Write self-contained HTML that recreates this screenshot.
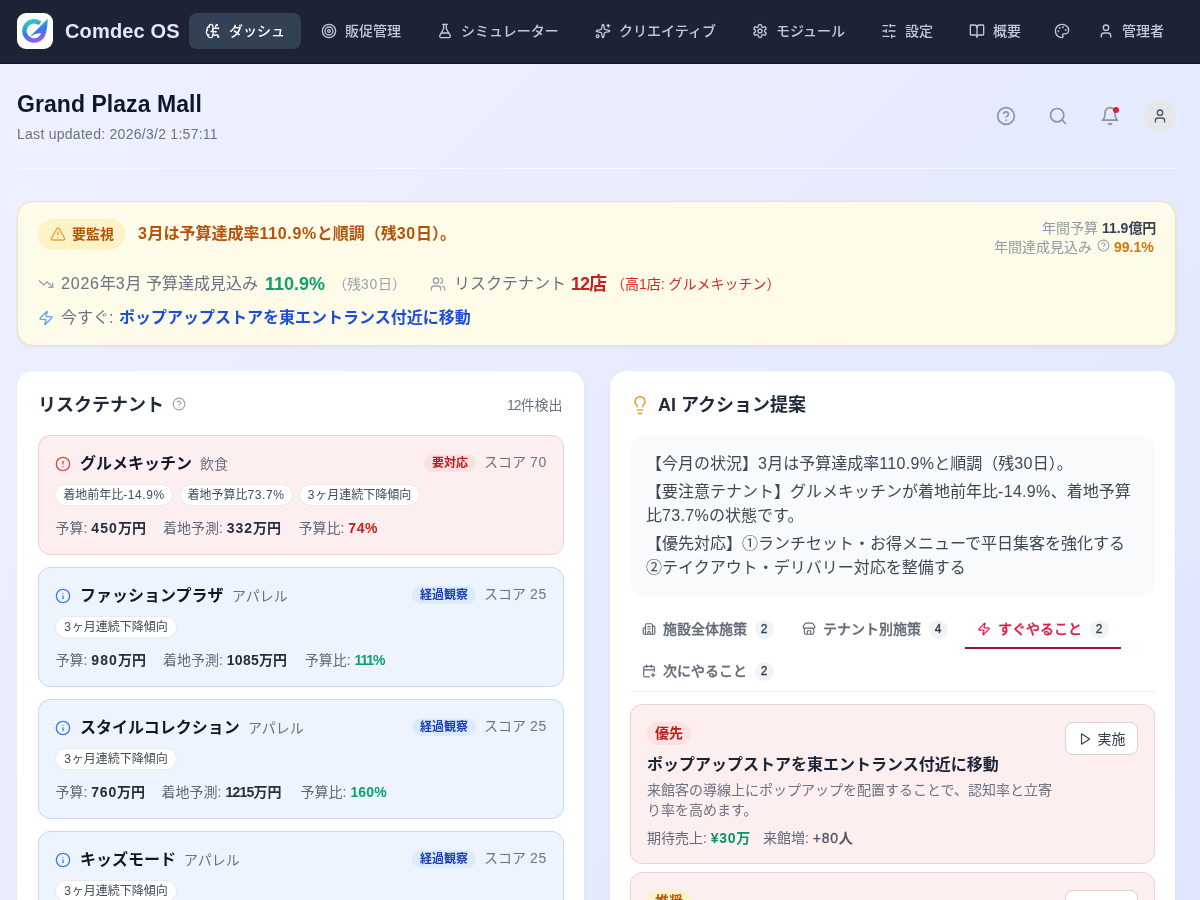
<!DOCTYPE html>
<html lang="ja">
<head>
<meta charset="utf-8">
<title>Comdec OS</title>
<style>
*{box-sizing:border-box;margin:0;padding:0}
html,body{width:1200px;height:900px;overflow:hidden}
body{font-family:"Liberation Sans","Noto Sans CJK JP",sans-serif;color:#111827;background:linear-gradient(135deg,#eef1fe 0%,#e7ebfd 50%,#e0e6fd 100%);position:relative;-webkit-font-smoothing:antialiased}
svg.i{fill:none;stroke:currentColor;stroke-width:2;stroke-linecap:round;stroke-linejoin:round;display:block;flex:none}
.abs{position:absolute}
.nw{white-space:nowrap}
/* NAV */
#nav{position:absolute;left:0;top:0;width:1200px;height:64px;background:#1e2235;border-bottom:1px solid #10162a}
#logo{position:absolute;left:17px;top:13px;width:36px;height:36px;border-radius:9px;background:#fff;overflow:hidden}
#brand{position:absolute;left:65px;top:18px;font-size:20px;line-height:26px;font-weight:700;--ds:0em;color:#e0e7ff;white-space:nowrap;letter-spacing:.15px}
.ni{position:absolute;top:13px;height:36px;border-radius:8px;display:flex;align-items:center;color:#c0c9d9;font-size:14px;font-weight:500;white-space:nowrap}
.ni svg{width:16px;height:16px;position:absolute;top:10px}
.ni span{position:absolute;top:8px;line-height:20px}
.ni.on{background:#334155;color:#fff}
/* HEADER */
#h1{position:absolute;left:17px;top:88px;font-size:23px;line-height:32px;letter-spacing:.05px;font-weight:700;--ds:0em;color:#0f172a;white-space:nowrap}
#sub{position:absolute;left:17px;top:124px;font-size:14px;line-height:20px;letter-spacing:.27px;color:#6b7280;white-space:nowrap}
.hb{position:absolute;color:#8c94a3}
.hb svg{width:20px;height:20px}
#divider{position:absolute;left:17px;top:168px;width:1158px;height:1px;background:rgba(255,255,255,.55)}
/* BANNER */
#banner{position:absolute;left:17px;top:201px;width:1159px;height:145px;border-radius:16px;background:#fefbe9;border:1px solid #f2e4aa;box-shadow:0 1px 3px rgba(0,0,0,.06)}

#banner .t{position:absolute;white-space:nowrap}
.pill{position:absolute;left:20px;top:17px;width:87px;height:31px;border-radius:16px;background:#fef3c7;color:#b45309}

/* CARDS */
.card{position:absolute;top:371px;height:560px;background:#fff;border-radius:16px;box-shadow:0 1px 3px rgba(0,0,0,.05)}
.card .t{position:absolute;white-space:nowrap}
.tc{position:absolute;left:21px;width:526px;height:120px;border-radius:12px;border:1px solid #c9d8ea;background:#eef4fe}
.tc.red{border-color:#efcfd0;background:#fdefef}
.tc .t{position:absolute;white-space:nowrap}
.tc .nm{left:41px;top:16px;font-size:16px;line-height:24px;font-weight:700;--ds:0em;color:#111827}
.tc .cat{top:18px;font-size:14px;line-height:20px;color:#6b7280}
.tc .bd{position:absolute;left:385px;top:18px;width:52px;height:18px;border-radius:9px;font-size:12px;line-height:18px;font-weight:700;--ds:0em;text-align:center;white-space:nowrap}
.tc .bd.r{background:#fbe1e1;color:#b91c1c}
.tc .bd.b{left:373px;width:64px;background:#dbeafe;color:#1e40af}
.tc .sc{left:445px;top:16px;font-size:14px;line-height:20px;color:#6b7280}
.chip{position:absolute;top:48px;height:22px;border-radius:11px;border:1px solid #e8eaee;background:#fff;font-size:12px;line-height:20px;color:#434c5a;white-space:nowrap;text-align:center}
.strow{position:absolute;left:16px;top:82px;font-size:14px;line-height:20px;color:#606876;white-space:nowrap}
.strow b{color:#252e3b}
.strow span.s{position:absolute;top:0}
.tc svg.ic{position:absolute;left:16px;top:20px;width:16px;height:16px}

#sum{position:absolute;left:21px;top:65px;width:524px;height:160px;border-radius:12px;background:#f8fafc;padding:16px 16px 16px 15px;font-size:16px;line-height:24px;color:#3f4856;--ds:.02em}
#sum p{white-space:nowrap;margin-bottom:4px}
.tab{position:absolute;height:40px;color:#636b78;font-size:14px;font-weight:500}
.tab svg{position:absolute;left:12px;top:13px;width:14px;height:14px}
.tab .t{left:33px;top:10px;line-height:20px;font-weight:500;-webkit-text-stroke:.3px}
.tab .n{position:absolute;top:11px;width:19px;height:19px;border-radius:10px;background:#f1f3f7;color:#374151;font-size:12px;line-height:19px;text-align:center;font-weight:400;-webkit-text-stroke:.35px}
.tab.on{color:#dc1c48;border-bottom:2px solid #9f1239}
.ac{position:absolute;left:20px;width:525px;height:160px;border-radius:12px;border:1px solid #ead3d6;background:#fdeef0}
.ac .t{position:absolute;white-space:nowrap}
.ac .pb{position:absolute;left:16px;top:17px;width:44px;height:23px;border-radius:12px;font-size:14px;line-height:23px;font-weight:700;--ds:0em;text-align:center}
.ac .btn{position:absolute;left:434px;top:17px;width:73px;height:33px;border-radius:8px;border:1px solid #d1d5db;background:#fff;color:#374151;font-size:14px}
.ac .btn svg{position:absolute;left:11.500px;top:9px;width:14px;height:14px}
.ac .btn span{position:absolute;left:31.500px;top:6px;line-height:20px}
#root{position:absolute;left:0;top:0;width:1200px;height:900px;will-change:transform}
.d{letter-spacing:var(--ds,.05em)}
b .d{letter-spacing:var(--bs,0em)}
#sub .d{letter-spacing:inherit}
</style>
</head>
<body>
<div id="root">
<div id="nav">
  <div id="logo"><svg viewBox="0 0 36 36" width="36" height="36" style="display:block"><defs><linearGradient id="lg" gradientUnits="userSpaceOnUse" x1="14" y1="6" x2="22" y2="30"><stop offset="0" stop-color="#2dd4bf"/><stop offset=".5" stop-color="#2f7fe6"/><stop offset="1" stop-color="#a855f7"/></linearGradient></defs><path d="M23.040 10.300A9.650 9.650 0 1 0 26.700 18.900" fill="none" stroke="url(#lg)" stroke-width="4.500"/><path d="M30.600 5.800L12.900 23.800C18 20.400 23.500 19.600 28.900 20C30.200 15.500 30.700 10.500 30.600 5.800Z" fill="url(#lg)"/></svg></div>
  <div id="brand">Comdec OS</div>

  <div class="ni on" style="left:189px;width:112px"><svg class="i" style="left:16px" viewBox="0 0 24 24"><path d="M12 5a3 3 0 1 0-5.997.125 4 4 0 0 0-2.526 5.770 4 4 0 0 0 .556 6.588A4 4 0 1 0 12 18Z"/><path d="M9 13a4.500 4.500 0 0 0 3-4"/><path d="M6.003 5.125A3 3 0 0 0 6.401 6.500"/><path d="M3.477 10.896a4 4 0 0 1 .585-.396"/><path d="M6 18a4 4 0 0 1-1.967-.516"/><path d="M12 13h4"/><path d="M12 18h6a2 2 0 0 1 2 2v1"/><path d="M12 8h8"/><path d="M16 8V5a2 2 0 0 1 2-2"/><circle cx="16" cy="13" r=".5"/><circle cx="18" cy="3" r=".5"/><circle cx="20" cy="21" r=".5"/><circle cx="20" cy="8" r=".5"/></svg><span style="left:40px">ダッシュ</span></div>
  <div class="ni" style="left:305px;width:112px"><svg class="i" style="left:16px" viewBox="0 0 24 24"><circle cx="12" cy="12" r="10"/><circle cx="12" cy="12" r="6"/><circle cx="12" cy="12" r="2"/></svg><span style="left:40px">販促管理</span></div>
  <div class="ni" style="left:421px;width:154px"><svg class="i" style="left:16px" viewBox="0 0 24 24"><path d="M14 2v6a2 2 0 0 0 .245.96l5.510 10.080A2 2 0 0 1 18 22H6a2 2 0 0 1-1.755-2.960l5.510-10.080A2 2 0 0 0 10 8V2"/><path d="M6.453 15h11.094"/><path d="M8.500 2h7"/></svg><span style="left:40px">シミュレーター</span></div>
  <div class="ni" style="left:579px;width:154px"><svg class="i" style="left:16px" viewBox="0 0 24 24"><path d="M11.017 2.814a1 1 0 0 1 1.966 0l1.051 5.558a2 2 0 0 0 1.594 1.594l5.558 1.051a1 1 0 0 1 0 1.966l-5.558 1.051a2 2 0 0 0-1.594 1.594l-1.051 5.558a1 1 0 0 1-1.966 0l-1.051-5.558a2 2 0 0 0-1.594-1.594l-5.558-1.051a1 1 0 0 1 0-1.966l5.558-1.051a2 2 0 0 0 1.594-1.594z"/><path d="M20 2v4"/><path d="M22 4h-4"/><circle cx="4" cy="20" r="2"/></svg><span style="left:40px">クリエイティブ</span></div>
  <div class="ni" style="left:736px;width:126px"><svg class="i" style="left:16px" viewBox="0 0 24 24"><path d="M12.220 2h-.440a2 2 0 0 0-2 2v.180a2 2 0 0 1-1 1.730l-.430.250a2 2 0 0 1-2 0l-.150-.080a2 2 0 0 0-2.730.730l-.220.380a2 2 0 0 0 .730 2.730l.150.100a2 2 0 0 1 1 1.720v.510a2 2 0 0 1-1 1.740l-.150.090a2 2 0 0 0-.730 2.730l.220.380a2 2 0 0 0 2.730.730l.150-.080a2 2 0 0 1 2 0l.430.250a2 2 0 0 1 1 1.730V20a2 2 0 0 0 2 2h.440a2 2 0 0 0 2-2v-.180a2 2 0 0 1 1-1.730l.430-.250a2 2 0 0 1 2 0l.150.080a2 2 0 0 0 2.730-.730l.220-.390a2 2 0 0 0-.730-2.730l-.150-.080a2 2 0 0 1-1-1.740v-.500a2 2 0 0 1 1-1.740l.150-.090a2 2 0 0 0 .730-2.730l-.220-.380a2 2 0 0 0-2.730-.730l-.150.080a2 2 0 0 1-2 0l-.430-.250a2 2 0 0 1-1-1.730V4a2 2 0 0 0-2-2z"/><circle cx="12" cy="12" r="3"/></svg><span style="left:40px">モジュール</span></div>
  <div class="ni" style="left:865px;width:84px"><svg class="i" style="left:16px" viewBox="0 0 24 24"><line x1="21" x2="14" y1="4" y2="4"/><line x1="10" x2="3" y1="4" y2="4"/><line x1="21" x2="12" y1="12" y2="12"/><line x1="8" x2="3" y1="12" y2="12"/><line x1="21" x2="16" y1="20" y2="20"/><line x1="12" x2="3" y1="20" y2="20"/><line x1="14" x2="14" y1="2" y2="6"/><line x1="8" x2="8" y1="10" y2="14"/><line x1="16" x2="16" y1="18" y2="22"/></svg><span style="left:40px">設定</span></div>
  <div class="ni" style="left:953px;width:84px"><svg class="i" style="left:16px" viewBox="0 0 24 24"><path d="M12 7v14"/><path d="M3 18a1 1 0 0 1-1-1V4a1 1 0 0 1 1-1h5a4 4 0 0 1 4 4 4 4 0 0 1 4-4h5a1 1 0 0 1 1 1v13a1 1 0 0 1-1 1h-6a3 3 0 0 0-3 3 3 3 0 0 0-3-3z"/></svg><span style="left:40px">概要</span></div>
  <div class="ni" style="left:1042px;width:40px"><svg class="i" style="left:12px" viewBox="0 0 24 24"><circle cx="13.500" cy="6.500" r=".5" fill="currentColor"/><circle cx="17.500" cy="10.500" r=".5" fill="currentColor"/><circle cx="8.500" cy="7.500" r=".5" fill="currentColor"/><circle cx="6.500" cy="12.500" r=".5" fill="currentColor"/><path d="M12 2C6.500 2 2 6.500 2 12s4.500 10 10 10c.926 0 1.648-.746 1.648-1.688 0-.437-.180-.835-.437-1.125-.290-.289-.438-.652-.438-1.125a1.640 1.640 0 0 1 1.668-1.668h1.996c3.051 0 5.555-2.503 5.555-5.554C21.965 6.012 17.461 2 12 2z"/></svg></div>
  <div class="ni" style="left:1086px;width:94px"><svg class="i" style="left:12px" viewBox="0 0 24 24"><path d="M19 21v-2a4 4 0 0 0-4-4H9a4 4 0 0 0-4 4v2"/><circle cx="12" cy="7" r="4"/></svg><span style="left:36px">管理者</span></div>
</div>
<div id="h1">Grand Plaza Mall</div>
<div id="sub">Last updated: <span class="d">2026/3/2</span> <span class="d">1:57:11</span></div>

<div class="hb" style="left:996px;top:106px"><svg class="i" viewBox="0 0 24 24"><circle cx="12" cy="12" r="10"/><path d="M9.090 9a3 3 0 0 1 5.830 1c0 2-3 3-3 3"/><path d="M12 17h.01"/></svg></div>
<div class="hb" style="left:1048px;top:106px"><svg class="i" viewBox="0 0 24 24"><circle cx="11" cy="11" r="8"/><path d="m21 21-4.300-4.300"/></svg></div>
<div class="hb" style="left:1100px;top:106px"><svg class="i" viewBox="0 0 24 24"><path d="M6 8a6 6 0 0 1 12 0c0 7 3 9 3 9H3s3-2 3-9"/><path d="M10.300 21a1.940 1.940 0 0 0 3.400 0"/></svg></div>
<div class="abs" style="left:1113px;top:107px;width:6px;height:6px;border-radius:3px;background:#e11d2e"></div>
<div class="abs" style="left:1144px;top:100px;width:32px;height:32px;border-radius:16px;background:#e5e7eb;color:#4b5563"><svg class="i" style="width:16px;height:16px;margin:8px" viewBox="0 0 24 24"><path d="M19 21v-2a4 4 0 0 0-4-4H9a4 4 0 0 0-4 4v2"/><circle cx="12" cy="7" r="4"/></svg></div>
<div id="divider"></div>
<div id="banner">
  <div class="pill"><svg class="i abs" style="left:12px;top:7px;width:16px;height:16px;color:#eaa23b" viewBox="0 0 24 24"><path d="m21.730 18-8-14a2 2 0 0 0-3.480 0l-8 14A2 2 0 0 0 4 21h16a2 2 0 0 0 1.730-3"/><path d="M12 9v4"/><path d="M12 17h.01"/></svg><span class="t" style="left:34px;top:5px;font-size:14px;line-height:20px;font-weight:700">要監視</span></div>
  <div class="t" id="bh" style="left:120px;top:20px;font-size:16px;line-height:24px;font-weight:700;--ds:.04em;color:#b45309"><span class="d">3</span>月は予算達成率<span class="d">110.9%</span>と順調（残<span class="d">30</span>日）。</div>
  <div class="t" style="left:1024px;top:16px;width:112px;text-align:right;font-size:14px;line-height:20px;color:#9299a5">年間予算 <b style="color:#374151"><span class="d">11.9</span>億円</b></div>
  <div class="t" style="left:976px;top:35px;font-size:14px;line-height:20px;color:#9299a5">年間達成見込み</div>
  <svg class="i abs" style="left:1078.500px;top:37px;width:13px;height:13px;color:#9ca3af" viewBox="0 0 24 24"><circle cx="12" cy="12" r="10"/><path d="M9.090 9a3 3 0 0 1 5.830 1c0 2-3 3-3 3"/><path d="M12 17h.01"/></svg>
  <div class="t" style="left:1096px;top:35px;font-size:14px;line-height:20px;font-weight:700;--ds:0em;color:#d97706"><span class="d">99.1%</span></div>

  <svg class="i abs" style="left:20px;top:74px;width:16px;height:16px;color:#9ca3af" viewBox="0 0 24 24"><polyline points="22 17 13.500 8.500 8.500 13.500 2 7"/><polyline points="16 17 22 17 22 11"/></svg>
  <div class="t" style="left:43px;top:70px;font-size:16px;line-height:24px;color:#6b7280"><span class="d">2026</span>年<span class="d">3</span>月 予算達成見込み</div>
  <div class="t" style="left:247px;top:68px;font-size:18px;line-height:28px;font-weight:700;--ds:0em;color:#0e9f6e"><span class="d">110.9%</span></div>
  <div class="t" style="left:315px;top:72px;font-size:14px;line-height:20px;color:#9ca3af">（残<span class="d">30</span>日）</div>
  <svg class="i abs" style="left:412px;top:74px;width:16px;height:16px;color:#9ca3af" viewBox="0 0 24 24"><path d="M16 21v-2a4 4 0 0 0-4-4H6a4 4 0 0 0-4 4v2"/><circle cx="9" cy="7" r="4"/><path d="M22 21v-2a4 4 0 0 0-3-3.870"/><path d="M16 3.130a4 4 0 0 1 0 7.750"/></svg>
  <div class="t" style="left:436px;top:70px;font-size:16px;line-height:24px;color:#6b7280">リスクテナント</div>
  <div class="t" style="left:553px;top:68px;font-size:18px;line-height:28px;font-weight:700;--ds:-.06em;color:#c81e1e"><span class="d">12</span>店</div>
  <div class="t" style="left:593px;top:72px;font-size:14px;line-height:20px;color:#dc2626;--ds:0em">（高<span class="d">1</span>店: グルメキッチン）</div>

  <svg class="i abs" style="left:20px;top:108px;width:16px;height:16px;color:#60a5fa" viewBox="0 0 24 24"><path d="M4 14a1 1 0 0 1-.780-1.630l9.900-10.200a.5.5 0 0 1 .860.460l-1.920 6.020A1 1 0 0 0 13 10h7a1 1 0 0 1 .780 1.630l-9.900 10.200a.5.500 0 0 1-.860-.460l1.920-6.020A1 1 0 0 0 11 14z"/></svg>
  <div class="t" style="left:43px;top:104px;font-size:16px;line-height:24px;color:#6b7280">今すぐ:</div>
  <div class="t" style="left:101px;top:104px;font-size:16px;line-height:24px;font-weight:700;--ds:0em;color:#1d4ed8">ポップアップストアを東エントランス付近に移動</div>
</div>

<div class="card" id="lc" style="left:17px;width:567px">
  <div class="t" style="left:21px;top:20px;font-size:18px;line-height:28px;font-weight:700;--ds:0em;color:#1e293b">リスクテナント</div>
  <svg class="i abs" style="left:155px;top:26px;width:14px;height:14px;color:#9ca3af" viewBox="0 0 24 24"><circle cx="12" cy="12" r="10"/><path d="M9.090 9a3 3 0 0 1 5.830 1c0 2-3 3-3 3"/><path d="M12 17h.01"/></svg>
  <div class="t" style="left:490px;top:24px;font-size:14px;line-height:20px;color:#6b7280;--ds:-.07em"><span class="d">12</span>件検出</div>

  <div class="tc red" style="top:64px"><svg class="i ic" style="color:#e04848" viewBox="0 0 24 24"><circle cx="12" cy="12" r="10"/><line x1="12" x2="12" y1="8" y2="12"/><line x1="12" x2="12.010" y1="16" y2="16"/></svg>
    <div class="t nm">グルメキッチン</div><div class="t cat" style="left:161px">飲食</div>
    <div class="bd r">要対応</div><div class="t sc">スコア <span class="d">70</span></div>
    <div class="chip" style="left:16px;width:118px">着地前年比<span class="d">-14.9%</span></div><div class="chip" style="left:140.5px;width:113px">着地予算比<span class="d">73.7%</span></div><div class="chip" style="left:260px;width:121px"><span class="d">3</span>ヶ月連続下降傾向</div>
    <div class="strow"><span class="s" style="left:0.5px;--bs:.081em">予算: <b><span class="d">450</span>万円</b></span><span class="s" style="left:108px;--bs:.07em">着地予測: <b><span class="d">332</span>万円</b></span><span class="s" style="left:243.5px;--bs:.04em">予算比: <b style="color:#c81e1e"><span class="d">74%</span></b></span></div>
  </div>
  <div class="tc" style="top:196px"><svg class="i ic" style="color:#3c7be8" viewBox="0 0 24 24"><circle cx="12" cy="12" r="10"/><path d="M12 16v-4"/><path d="M12 8h.01"/></svg>
    <div class="t nm">ファッションプラザ</div><div class="t cat" style="left:193px">アパレル</div>
    <div class="bd b">経過観察</div><div class="t sc">スコア <span class="d">25</span></div>
    <div class="chip" style="left:16px;width:122px"><span class="d">3</span>ヶ月連続下降傾向</div>
    <div class="strow"><span class="s" style="left:0.5px;--bs:.081em">予算: <b><span class="d">980</span>万円</b></span><span class="s" style="left:108px;--bs:.02em">着地予測: <b><span class="d">1085</span>万円</b></span><span class="s" style="left:249.8px;--bs:-.08em">予算比: <b style="color:#0e9f6e"><span class="d">111%</span></b></span></div>
  </div>
  <div class="tc" style="top:328px"><svg class="i ic" style="color:#3c7be8" viewBox="0 0 24 24"><circle cx="12" cy="12" r="10"/><path d="M12 16v-4"/><path d="M12 8h.01"/></svg>
    <div class="t nm">スタイルコレクション</div><div class="t cat" style="left:209px">アパレル</div>
    <div class="bd b">経過観察</div><div class="t sc">スコア <span class="d">25</span></div>
    <div class="chip" style="left:16px;width:122px"><span class="d">3</span>ヶ月連続下降傾向</div>
    <div class="strow"><span class="s" style="left:0.5px;--bs:.057em">予算: <b><span class="d">760</span>万円</b></span><span class="s" style="left:106.6px;--bs:-.052em">着地予測: <b><span class="d">1215</span>万円</b></span><span class="s" style="left:245.6px;--bs:.015em">予算比: <b style="color:#0e9f6e"><span class="d">160%</span></b></span></div>
  </div>
  <div class="tc" style="top:460px"><svg class="i ic" style="color:#3c7be8" viewBox="0 0 24 24"><circle cx="12" cy="12" r="10"/><path d="M12 16v-4"/><path d="M12 8h.01"/></svg>
    <div class="t nm">キッズモード</div><div class="t cat" style="left:145px">アパレル</div>
    <div class="bd b">経過観察</div><div class="t sc">スコア <span class="d">25</span></div>
    <div class="chip" style="left:16px;width:122px"><span class="d">3</span>ヶ月連続下降傾向</div>
  </div>
</div>

<div class="card" id="rc" style="left:610px;width:565px">
  <svg class="i abs" style="left:20px;top:24px;width:20px;height:20px;color:#e6a63c" viewBox="0 0 24 24"><path d="M15 14c.2-1 .7-1.700 1.500-2.500 1-.9 1.500-2.200 1.500-3.500A6 6 0 0 0 6 8c0 1 .2 2.200 1.500 3.500.7.700 1.300 1.500 1.500 2.500"/><path d="M9 18h6"/><path d="M10 22h4"/></svg>
  <div class="t" style="left:48px;top:20px;font-size:18px;line-height:28px;font-weight:700;--ds:0em;color:#1e293b">AI アクション提案</div>
  <div id="sum">
    <p>【今月の状況】<span class="d">3</span>月は予算達成率<span class="d">110.9%</span>と順調（残<span class="d">30</span>日）。</p>
    <p>【要注意テナント】グルメキッチンが着地前年比<span class="d">-14.9%</span>、着地予算<br>比<span class="d">73.7%</span>の状態です。</p>
    <p>【優先対応】①ランチセット・お得メニューで平日集客を強化する<br>②テイクアウト・デリバリー対応を整備する</p>
  </div>

  <div class="tab" style="left:20px;top:238px;width:156px"><svg class="i" viewBox="0 0 24 24"><path d="M10 12h4"/><path d="M10 8h4"/><path d="M14 21v-3a2 2 0 0 0-4 0v3"/><path d="M6 10H4a2 2 0 0 0-2 2v7a2 2 0 0 0 2 2h16a2 2 0 0 0 2-2V9a2 2 0 0 0-2-2h-2"/><path d="M6 21V5a2 2 0 0 1 2-2h8a2 2 0 0 1 2 2v16"/></svg><div class="t">施設全体施策</div><div class="n" style="left:125px"><span class="d">2</span></div></div>
  <div class="tab" style="left:180px;top:238px;width:170px"><svg class="i" viewBox="0 0 24 24"><path d="M15 21v-5a1 1 0 0 0-1-1h-4a1 1 0 0 0-1 1v5"/><path d="M17.774 10.310a1.120 1.120 0 0 0-1.549 0 2.500 2.500 0 0 1-3.451 0 1.120 1.120 0 0 0-1.548 0 2.500 2.500 0 0 1-3.452 0 1.120 1.120 0 0 0-1.549 0 2.500 2.500 0 0 1-3.770-3.248l2.889-4.184A2 2 0 0 1 7 2h10a2 2 0 0 1 1.653.873l2.895 4.192a2.500 2.500 0 0 1-3.774 3.244"/><path d="M4 10.950V19a2 2 0 0 0 2 2h12a2 2 0 0 0 2-2v-8.050"/></svg><div class="t">テナント別施策</div><div class="n" style="left:139px"><span class="d">4</span></div></div>
  <div class="tab on" style="left:355px;top:238px;width:156px"><svg class="i" viewBox="0 0 24 24"><path d="M4 14a1 1 0 0 1-.780-1.630l9.900-10.200a.5.500 0 0 1 .860.460l-1.920 6.020A1 1 0 0 0 13 10h7a1 1 0 0 1 .780 1.630l-9.900 10.200a.5.500 0 0 1-.860-.460l1.920-6.020A1 1 0 0 0 11 14z"/></svg><div class="t">すぐやること</div><div class="n" style="left:125px"><span class="d">2</span></div></div>
  <div class="tab" style="left:20px;top:280px;width:156px"><svg class="i" viewBox="0 0 24 24"><path d="M8 2v4"/><path d="M16 2v4"/><path d="M21 13V6a2 2 0 0 0-2-2H5a2 2 0 0 0-2 2v14a2 2 0 0 0 2 2h8"/><path d="M3 10h18"/><path d="M16 19h6"/><path d="M19 16v6"/></svg><div class="t">次にやること</div><div class="n" style="left:125px"><span class="d">2</span></div></div>
  <div class="abs" style="left:21px;top:320px;width:524px;height:1px;background:#eceef2"></div>

  <div class="ac" style="top:333px">
    <div class="pb" style="background:#fee2e2;color:#b91c1c">優先</div>
    <div class="t" style="left:16px;top:47.500px;font-size:16px;line-height:24px;font-weight:700;--ds:0em;color:#1c2533">ポップアップストアを東エントランス付近に移動</div>
    <div class="t" style="left:16px;top:74.500px;font-size:14px;line-height:20.500px;color:#6b7280">来館客の導線上にポップアップを配置することで、認知率と立寄<br>り率を高めます。</div>
    <div class="t" style="left:16px;top:123px;font-size:14px;line-height:20px;color:#636b78">期待売上: <b style="color:#059669;--bs:.05em"><span class="d">¥30</span>万</b></div>
    <div class="t" style="left:132px;top:123px;font-size:14px;line-height:20px;color:#636b78">来館増: <span style="font-weight:500;color:#4b5563;-webkit-text-stroke:.3px"><span class="d">+80</span>人</span></div>
    <div class="btn"><svg class="i" viewBox="0 0 24 24"><polygon points="6 3 20 12 6 21 6 3"/></svg><span>実施</span></div>
  </div>
  <div class="ac" style="top:501px">
    <div class="pb" style="background:#fef3c7;color:#b45309">推奨</div>
    <div class="btn"><svg class="i" viewBox="0 0 24 24"><polygon points="6 3 20 12 6 21 6 3"/></svg><span>実施</span></div>
  </div>
</div>
</div>
</body>
</html>
